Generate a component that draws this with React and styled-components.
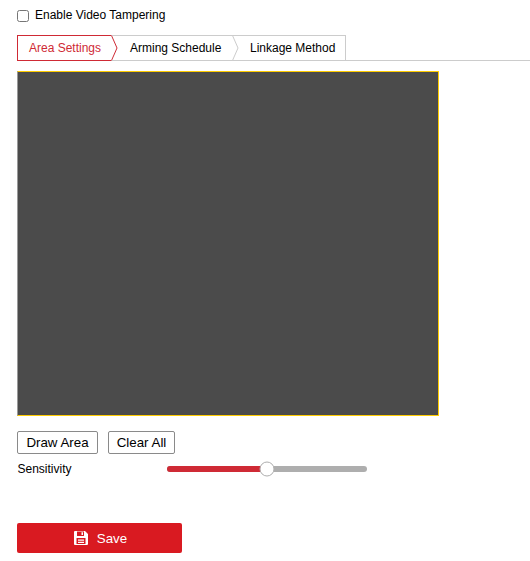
import React from "react";
import styled, { createGlobalStyle } from "styled-components";

const Global = createGlobalStyle`
  html, body { margin: 0; padding: 0; background: #fff; }
  body { font-family: "Liberation Sans", Arial, sans-serif; color: #000; }
`;

const Page = styled.div`
  width: 530px;
  height: 561px;
  box-sizing: border-box;
  padding: 7px 0 0 17px;
  overflow: hidden;
  display: flex;
  flex-direction: column;
  align-items: flex-start;
`;

const EnableRow = styled.label`
  display: flex;
  align-items: center;
  gap: 6px;
  height: 16px;
  font-size: 12px;
  line-height: 16px;
`;

const CheckBox = styled.span`
  width: 12px;
  height: 12px;
  margin-top: 2px;
  box-sizing: border-box;
  border: 1px solid #767676;
  border-radius: 2.5px;
  background: #fff;
`;

const TabBar = styled.div`
  margin-top: 12px;
  width: 513px;
  height: 26px;
  box-sizing: border-box;
  border-bottom: 1px solid #ccc;
  display: flex;
`;

const Tab = styled.div`
  position: relative;
  width: ${(p) => p.$width}px;
  height: 26px;
  box-sizing: border-box;
  padding-left: ${(p) => p.$pad}px;
  border-top: 1px solid ${(p) => (p.$active ? "#cf2a35" : "#ccc")};
  border-bottom: 1px solid ${(p) => (p.$active ? "#cf2a35" : "#ccc")};
  border-left: ${(p) => (p.$active ? "1px solid #cf2a35" : "none")};
  border-right: ${(p) => (p.$last ? "1px solid #ccc" : "none")};
  font-size: 12px;
  line-height: 24px;
  color: ${(p) => (p.$active ? "#cf2a35" : "#000")};
`;

const Chevron = styled.svg`
  position: absolute;
  left: 100%;
  top: -1px;
  width: 7px;
  height: 26px;
  overflow: visible;
  z-index: 1;
`;

const Preview = styled.div`
  margin-top: 10px;
  width: 422px;
  height: 345px;
  box-sizing: border-box;
  background: #4b4b4b;
  border: 1px solid #fc0;
  border-left-color: #9a9a9a;
`;

const ButtonRow = styled.div`
  margin-top: 15px;
  display: flex;
  gap: 10px;
`;

const ToolButton = styled.button`
  height: 23px;
  width: ${(p) => p.$width}px;
  padding: 0;
  box-sizing: border-box;
  background: #fff;
  border: 1px solid #8a8a8a;
  border-radius: 2px;
  font-family: inherit;
  font-size: 13.33px;
  color: #000;
`;

const SliderRow = styled.div`
  margin-top: 7px;
  height: 16px;
  display: flex;
  align-items: center;
`;

const SliderLabel = styled.span`
  width: 150px;
  padding-left: 0.5px;
  box-sizing: border-box;
  font-size: 12px;
`;

const Track = styled.div`
  position: relative;
  width: 200px;
  height: 6px;
  border-radius: 3px;
  background: #aeaeae;
`;

const Fill = styled.div`
  height: 100%;
  border-radius: 3px 0 0 3px;
  background: #cf2a35;
`;

const Thumb = styled.div`
  position: absolute;
  top: 50%;
  width: 15px;
  height: 15px;
  box-sizing: border-box;
  border-radius: 50%;
  background: #fff;
  border: 1px solid #aeaeae;
  transform: translate(-50%, -50%);
`;

const SaveButton = styled.button`
  margin-top: 46px;
  width: 165px;
  height: 30px;
  padding: 0 0 0 2px;
  border: none;
  border-radius: 2px;
  background: #d91a21;
  color: #fff;
  font-family: inherit;
  font-size: 13.33px;
  font-weight: 400;
  display: flex;
  align-items: center;
  justify-content: center;
  gap: 9px;
`;

const SaveGlyph = styled.svg`
  width: 14px;
  height: 14px;
  display: block;
`;

const arrow = (stroke) => (
  <Chevron viewBox="0 0 7 26">
    <path d="M0.5 0.5 L6 13 L0.5 25.5" fill="#fff" stroke={stroke} strokeWidth="1" />
  </Chevron>
);

export default function App() {
  const value = 50;
  return (
    <Page>
      <Global />
      <EnableRow>
        <CheckBox />
        Enable Video Tampering
      </EnableRow>
      <TabBar>
        <Tab $active $width={94} $pad={11}>
          Area Settings
          {arrow("#cf2a35")}
        </Tab>
        <Tab $width={121} $pad={19}>
          Arming Schedule
          {arrow("#ccc")}
        </Tab>
        <Tab $last $width={114} $pad={18}>
          Linkage Method
        </Tab>
      </TabBar>
      <Preview />
      <ButtonRow>
        <ToolButton $width={81}>Draw Area</ToolButton>
        <ToolButton $width={67}>Clear All</ToolButton>
      </ButtonRow>
      <SliderRow>
        <SliderLabel>Sensitivity</SliderLabel>
        <Track>
          <Fill style={{ width: `${value}%` }} />
          <Thumb style={{ left: `${value}%` }} />
        </Track>
      </SliderRow>
      <SaveButton>
        <SaveGlyph viewBox="0 0 14 14">
          <path
            fillRule="evenodd"
            fill="#fff"
            d="M0 1 Q0 0 1 0 H11 L14 3 V13 Q14 14 13 14 H1 Q0 14 0 13 Z M3 0.5 V5 H10 V0.5 Z M7.5 1.2 V4 H9 V1.2 Z M2.5 7 V13 H11.5 V7 Z"
          />
          <path fill="#fff" d="M4 8.6 H10 V9.8 H4 Z M4 10.8 H10 V12 H4 Z" />
        </SaveGlyph>
        Save
      </SaveButton>
    </Page>
  );
}
